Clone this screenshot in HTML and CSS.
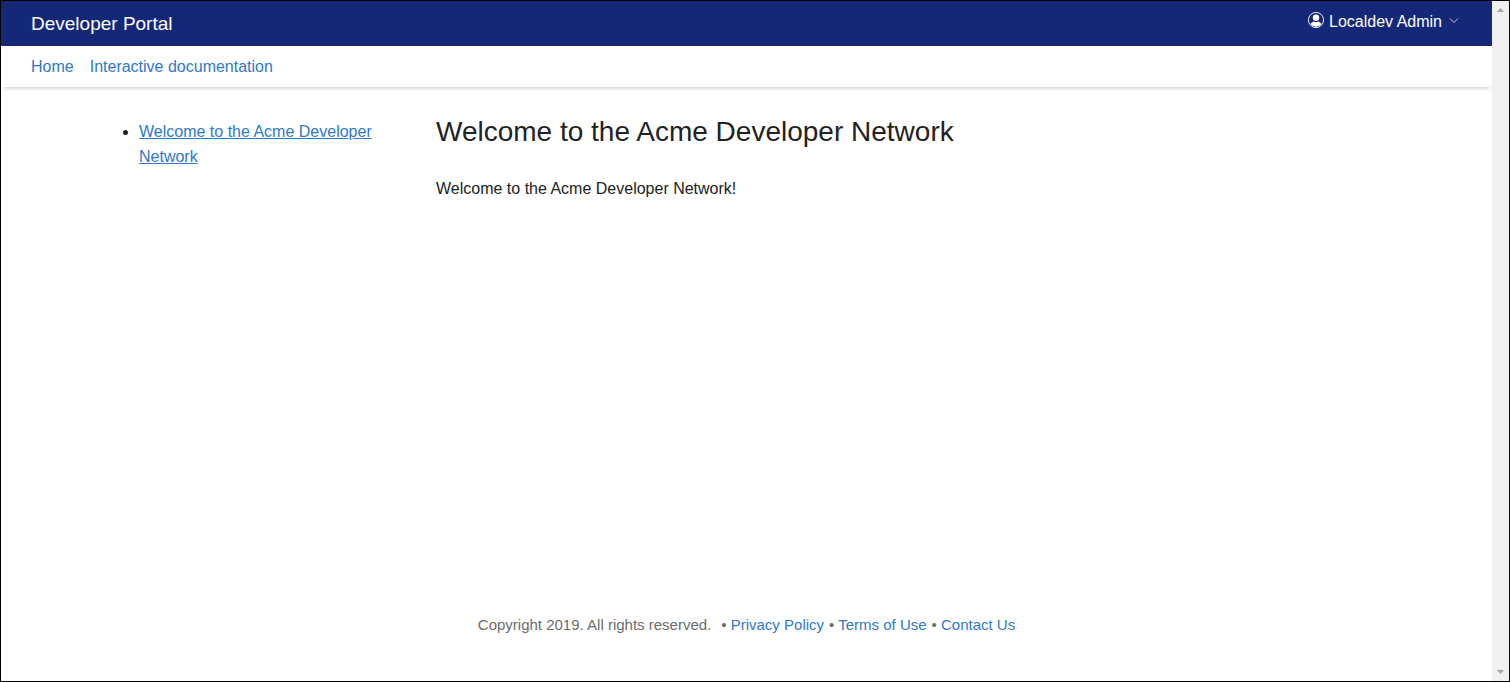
FILE: index.html
```html
<!DOCTYPE html>
<html lang="en">
<head>
<meta charset="utf-8">
<title>Developer Portal</title>
<link rel="stylesheet" href="styles.css">
</head>
<body>
<div class="window">
  <div class="page">
    <header class="topbar">
      <div class="brand">Developer Portal</div>
      <button class="account" type="button">
        <svg class="avatar" viewBox="0 0 18 18" aria-hidden="true">
          <circle cx="9" cy="9" r="7.6" fill="none" stroke="currentColor" stroke-width="0.9"/>
          <circle cx="9" cy="6.7" r="3.2" fill="currentColor"/>
          <path d="M3.6 12.9C4.3 11.4 6 10.8 7 10.5Q9 11.8 11 10.5C12 10.8 13.700 11.4 14.4 12.9A6.600 6.600 0 0 1 3.6 12.9Z" fill="currentColor"/>
        </svg>
        <span>Localdev Admin</span>
        <svg class="chevron" viewBox="0 0 10 10" aria-hidden="true">
          <path d="M1 2.500L5 6.500L9 2.500" fill="none" stroke="#c3cae6" stroke-width="1"/>
        </svg>
      </button>
    </header>
    <nav class="mainnav">
      <a href="#">Home</a>
      <a href="#">Interactive documentation</a>
    </nav>
    <div class="content">
      <ul class="toc">
        <li><a href="#">Welcome to the Acme Developer Network</a></li>
      </ul>
      <main>
        <h1>Welcome to the Acme Developer Network</h1>
        <p>Welcome to the Acme Developer Network!</p>
      </main>
    </div>
    <footer class="footer">
      <span class="copyright">Copyright 2019. All rights reserved.</span>
      <span>• <a href="#">Privacy Policy</a></span>
      <span>• <a href="#">Terms of Use</a></span>
      <span>• <a href="#">Contact Us</a></span>
    </footer>
  </div>
  <div class="scrollbar" aria-hidden="true">
    <svg viewBox="0 0 17 17"><path d="M5 11L8.500 7L12 11Z" fill="#a3a3a3"/></svg>
    <svg viewBox="0 0 17 17"><path d="M5 6L8.500 10L12 6Z" fill="#a3a3a3"/></svg>
  </div>
</div>
</body>
</html>
```
FILE: styles.css
```css
* {
  box-sizing: border-box;
}

body {
  margin: 0;
  background: #fff;
  color: #222;
  font: 16px/25px "Liberation Sans", Arial, sans-serif;
}

a {
  color: #3078c8;
  text-decoration: none;
}

.window {
  display: flex;
  min-height: 100vh;
  border: 1px solid #000;
}

.page {
  flex: 1;
  display: flex;
  flex-direction: column;
}

.topbar {
  display: flex;
  align-items: center;
  justify-content: space-between;
  height: 45px;
  padding: 0 33px 0 30px;
  background: #152878;
  color: #fff;
}

.brand {
  font-size: 19px;
}

.account {
  display: flex;
  align-items: center;
  padding: 0 0 4px;
  border: 0;
  background: none;
  color: inherit;
  font: inherit;
  cursor: pointer;
}

.avatar {
  width: 18px;
  height: 18px;
  margin: 0 4px 4px 0;
}

.chevron {
  width: 10px;
  height: 10px;
  margin: 0 0 2px 7px;
}

.mainnav {
  display: flex;
  gap: 16px;
  padding: 8px 30px;
  box-shadow: 0 4px 4px -3px rgba(0, 0, 0, 0.22);
}

.content {
  flex: 1;
  display: grid;
  grid-template-columns: 297px 1fr;
  gap: 40px;
  width: 100%;
  max-width: 1295px;
  margin: 0 auto;
  padding-top: 32px;
}

.toc {
  margin: 0;
  padding: 0 20px 0 40px;
}

.toc a {
  text-decoration: underline;
}

h1 {
  margin: 0 0 32px;
  font-size: 28px;
  font-weight: 400;
  line-height: 25px;
}

p {
  margin: 0;
}

.footer {
  display: flex;
  justify-content: center;
  gap: 5px;
  padding-bottom: 44px;
  color: #6c6c6c;
  font-size: 15px;
}

.copyright {
  margin-right: 5px;
}

.scrollbar {
  display: flex;
  flex-direction: column;
  justify-content: space-between;
  width: 17px;
  background: #f0f0f0;
}

.scrollbar svg {
  width: 17px;
  height: 17px;
}
```
